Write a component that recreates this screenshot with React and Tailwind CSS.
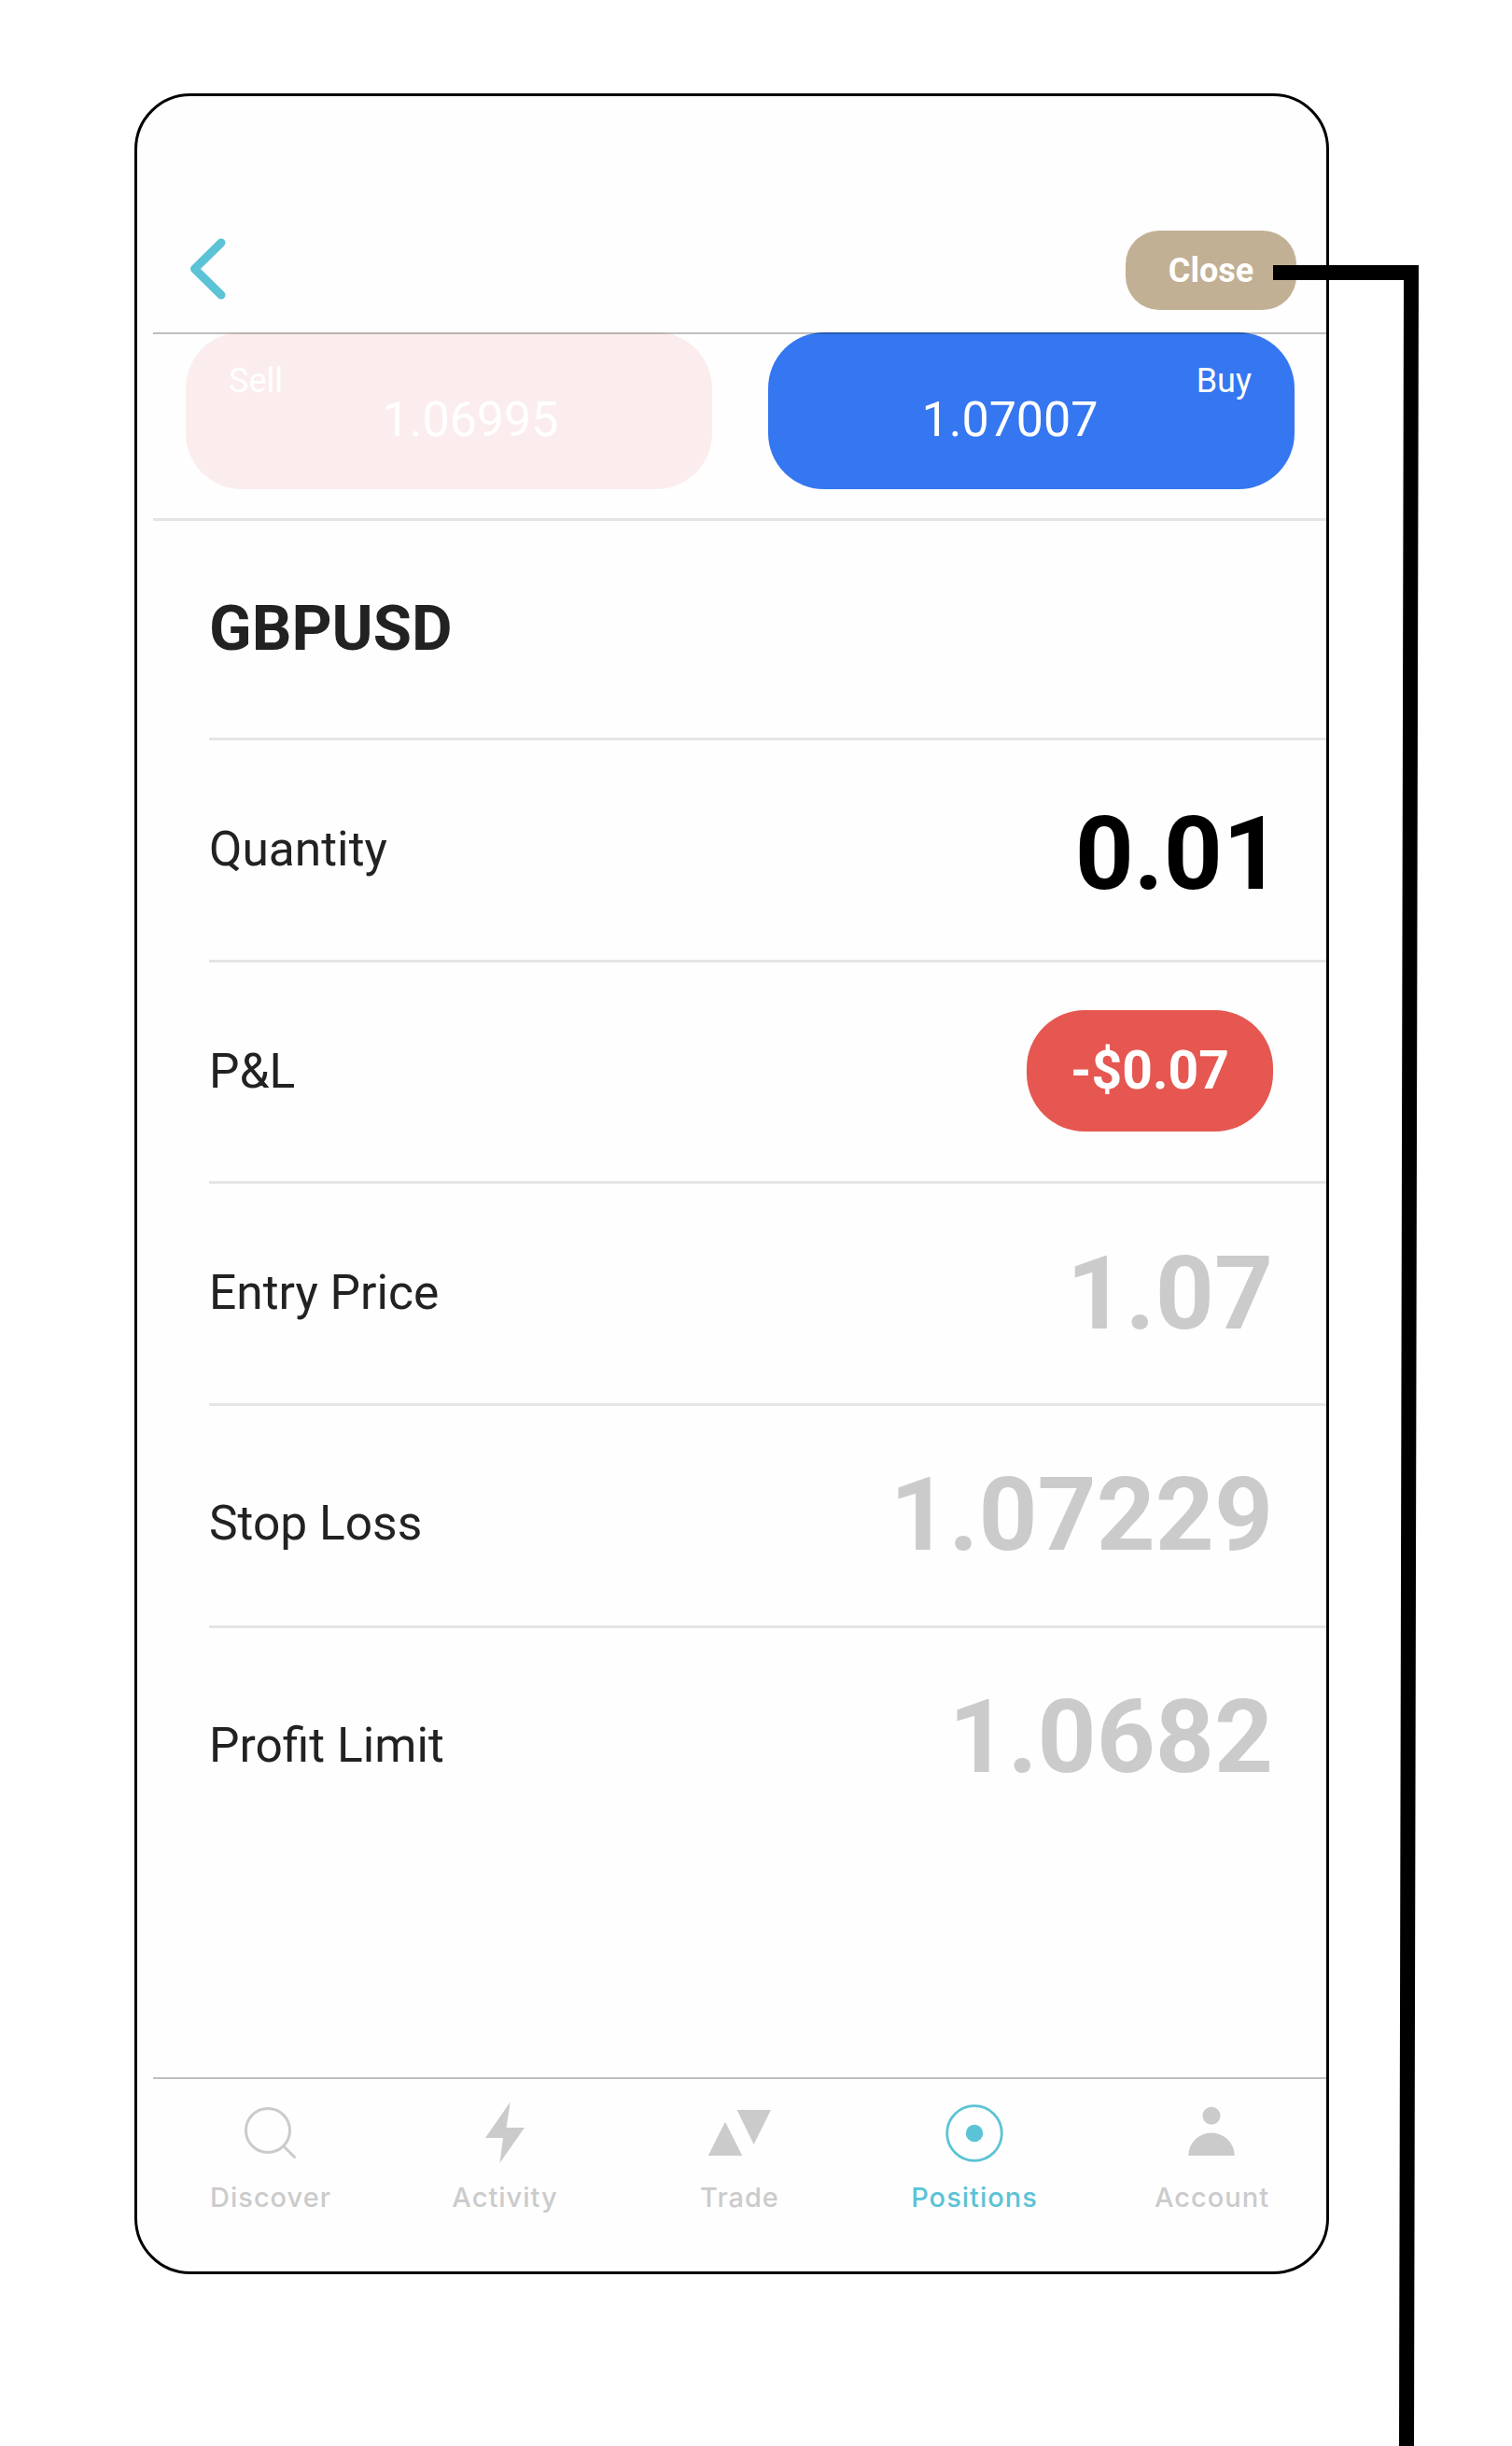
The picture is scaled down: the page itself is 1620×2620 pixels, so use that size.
const rows = [
    { label: "Quantity", value: "0.01", type: "active" },
    { label: "P&L", value: "-$0.07", type: "badge" },
    { label: "Entry Price", value: "1.07", type: "muted" },
    { label: "Stop Loss", value: "1.07229", type: "muted", low: true },
    { label: "Profit Limit", value: "1.0682", type: "muted", low: true },
]

const tabs = [
    { label: "Discover", icon: "discover" },
    { label: "Activity", icon: "activity" },
    { label: "Trade", icon: "trade" },
    { label: "Positions", icon: "positions", active: true },
    { label: "Account", icon: "account" },
]

const TabIcon = ({ name }) => {
    switch (name) {
        case "discover":
            return (
                <g fill="none" stroke="currentColor" strokeWidth="3">
                    <circle cx="32" cy="32" r="23.5" />
                    <path d="M48.5 48.5 L61.5 61.5" />
                </g>
            )
        case "activity":
            return <path fill="currentColor" d="M40.7 1.5 L14 40 H33 L29.5 66.7 L56 29 H36.5 Z" />
        case "trade":
            return (
                <g fill="currentColor">
                    <path d="M20 22.7 L38.2 59 H1.8 Z" />
                    <path d="M32.6 10 H69 L50.6 47 Z" />
                </g>
            )
        case "positions":
            return (
                <g>
                    <circle cx="35" cy="35" r="29.3" fill="none" stroke="currentColor" strokeWidth="2.8" />
                    <circle cx="35" cy="35" r="9.2" fill="currentColor" />
                </g>
            )
        case "account":
            return (
                <g fill="currentColor">
                    <circle cx="35" cy="16.3" r="9.5" />
                    <path d="M10.2 59 A24.8 24.4 0 0 1 59.8 59 Z" />
                </g>
            )
    }
}

const Header = () => {
    return (
        <header className="relative z-10 flex h-[255px] items-end justify-between border-b-2 border-black/25 pr-[32px] pb-[24px] pl-[38px]">
            <svg className="mb-[10px] h-[68px] w-[44px]" viewBox="0 0 44 68" fill="none">
                <path d="M35 6 L6.5 34 L35 62" stroke="#5bc3d5" strokeWidth="9" strokeLinecap="round" strokeLinejoin="round" />
            </svg>
            <button className="h-[85px] w-[183px] rounded-[36px] bg-[#c2b095] text-[36px] leading-none font-bold text-white">
                Close
            </button>
        </header>
    )
}

const Quotes = () => {
    return (
        <section className="-mt-[2px] flex h-[202px] justify-between border-b-[3px] border-[#e5e5e5] pr-[34px] pl-[35px] text-white">
            <div className="flex h-[168px] w-[564px] flex-col rounded-[60px] bg-[#fbeded] px-[46px] pt-[34px]">
                <span className="text-[36px] leading-[36px]">Sell</span>
                <span className="-mt-[2px] pl-[46px] text-center text-[52px] leading-[52px]">1.06995</span>
            </div>
            <div className="flex h-[168px] w-[564px] flex-col rounded-[60px] bg-[#3577f1] px-[46px] pt-[34px]">
                <span className="text-right text-[36px] leading-[36px]">Buy</span>
                <span className="-mt-[2px] pr-[46px] text-center text-[52px] leading-[52px]">1.07007</span>
            </div>
        </section>
    )
}

const RowValue = ({ row }) => {
    switch (row.type) {
        case "active":
            return <span className="-mr-[9px] pt-[10px] text-[110px] leading-none font-bold text-black">{row.value}</span>
        case "badge":
            return (
                <span className="mb-[2px] flex h-[130px] w-[264px] items-center justify-center rounded-[62px] bg-[#e55750] pb-[1px] text-[57px] leading-none font-bold text-white">
                    {row.value}
                </span>
            )
        default:
            return <span className="text-[110px] leading-none font-bold text-[#cbcbcb]">{row.value}</span>
    }
}

const Row = ({ row }) => {
    return (
        <div className="flex h-[237.7px] items-center justify-between border-t-[3px] border-[#e5e5e5] pr-[57px]">
            <span className={row.low ? "pt-[17px] text-[51.5px] leading-none" : "pb-[1px] text-[51.5px] leading-none"}>
                {row.label}
            </span>
            <RowValue row={row} />
        </div>
    )
}

const TabBar = () => {
    return (
        <nav className="grid h-[208px] grid-cols-[251px_251px_252px_251px_1fr] border-t-2 border-[#bfbfbf] pt-[23px]">
            {tabs.map((tab) => (
                <div
                    key={tab.label}
                    className={
                        tab.active
                            ? "flex flex-col items-center text-[#5bc3d5]"
                            : "flex flex-col items-center text-[#cbcbcb] last:-mr-[6px]"
                    }
                >
                    <svg className="h-[70px] w-[70px]" viewBox="0 0 70 70">
                        <TabIcon name={tab.icon} />
                    </svg>
                    <span className="mt-[18px] ml-[1px] font-[Inter,sans-serif] text-[29px] leading-[32px] font-medium tracking-[1px]">
                        {tab.label}
                    </span>
                </div>
            ))}
        </nav>
    )
}

export default function App() {
    return (
        <div className="relative h-[2620px] w-[1620px] overflow-hidden bg-white pt-[100px] pl-[144px] font-[Roboto,sans-serif] text-[#222222]">
            <main className="flex h-[2336px] w-[1280px] flex-col overflow-hidden rounded-[60px] border-[3px] border-black bg-[#fefefe] pl-[17px]">
                <Header />
                <Quotes />
                <section className="flex-1 pl-[60px]">
                    <h1 className="flex h-[232px] items-center pb-[1px] text-[67px] leading-none font-bold">GBPUSD</h1>
                    {rows.map((row) => (
                        <Row key={row.label} row={row} />
                    ))}
                </section>
                <TabBar />
            </main>

            {/* callout line running from the Close button to the page bottom */}
            <svg className="absolute top-0 left-0 z-20 h-full w-full" viewBox="0 0 1620 2620">
                <path d="M1364 284 H1520 L1515 2620 H1499 L1504 300 H1364 Z" />
            </svg>
        </div>
    )
}
